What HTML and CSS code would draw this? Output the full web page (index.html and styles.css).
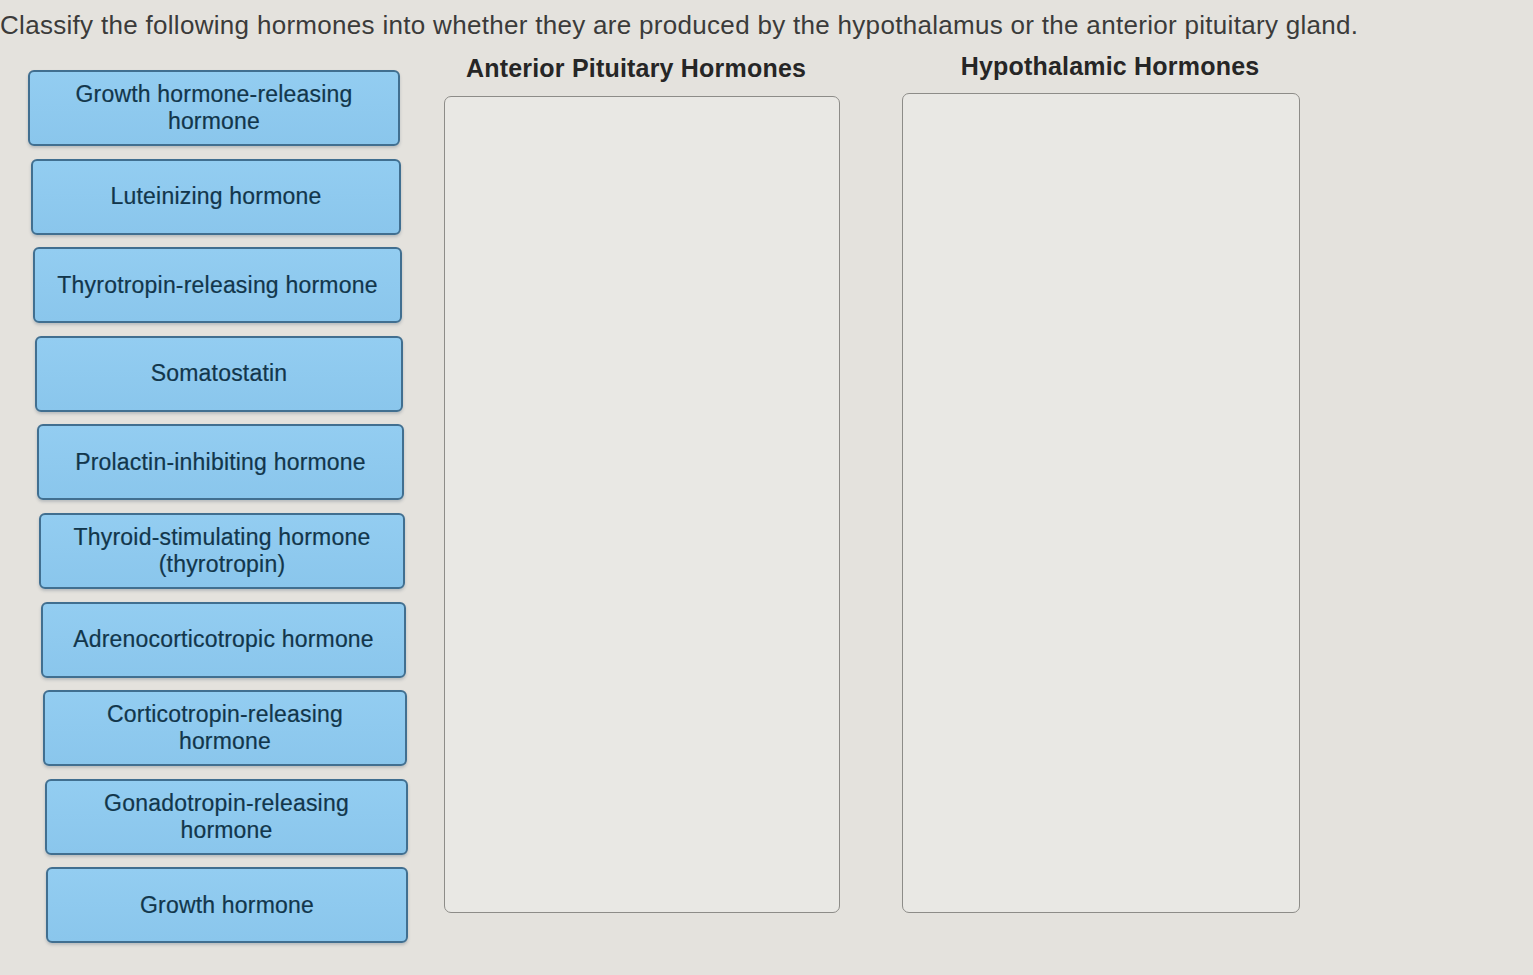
FILE: index.html
```html
<!DOCTYPE html>
<html lang="en">
<head>
<meta charset="utf-8">
<title>Classify hormones</title>
<link rel="stylesheet" href="styles.css">
</head>
<body>
<h1 class="prompt">Classify the following hormones into whether they are produced by the hypothalamus or the anterior pituitary gland.</h1>
<div class="workspace">
  <div class="choices">
    <div class="card">Growth hormone-releasing<br>hormone</div>
    <div class="card">Luteinizing hormone</div>
    <div class="card">Thyrotropin-releasing hormone</div>
    <div class="card">Somatostatin</div>
    <div class="card">Prolactin-inhibiting hormone</div>
    <div class="card">Thyroid-stimulating hormone<br>(thyrotropin)</div>
    <div class="card">Adrenocorticotropic hormone</div>
    <div class="card">Corticotropin-releasing<br>hormone</div>
    <div class="card">Gonadotropin-releasing<br>hormone</div>
    <div class="card">Growth hormone</div>
  </div>
  <div class="bucket bucket-ap">
    <h2 class="bucket-title">Anterior Pituitary Hormones</h2>
    <div class="drop"></div>
  </div>
  <div class="bucket bucket-hy">
    <h2 class="bucket-title">Hypothalamic Hormones</h2>
    <div class="drop"></div>
  </div>
</div>
</body>
</html>
```

FILE: styles.css
```css
html, body {
  margin: 0;
  padding: 0;
}
body {
  background: #e4e2dd;
  font-family: "Liberation Sans", Arial, sans-serif;
  width: 1533px;
  height: 975px;
  overflow: hidden;
}
.prompt {
  margin: 0;
  padding: 11px 0 0 0;
  font-size: 26px;
  line-height: 28px;
  letter-spacing: 0.3px;
  font-weight: normal;
  color: #3b3b3a;
  white-space: nowrap;
}
.workspace {
  display: flex;
  align-items: flex-start;
  padding-top: 15px;
}
.choices {
  width: 420px;
  display: flex;
  flex-direction: column;
  gap: 12.6px;
  padding-top: 16px;
}
.card {
  box-sizing: border-box;
  width: 372px;
  height: 76px;
  display: flex;
  align-items: center;
  justify-content: center;
  text-align: center;
  font-size: 23px;
  line-height: 27px;
  letter-spacing: 0.2px;
  color: #12364b;
  background: linear-gradient(180deg, #93cdf1 0%, #8ac6ec 100%);
  border: 2px solid #416f90;
  border-radius: 6px;
  box-shadow: 0 2px 3px rgba(60, 80, 100, 0.25);
  -webkit-text-stroke: 0.2px #12364b;
}
.card:nth-child(1) { margin-left: 28px; }
.card:nth-child(2) { margin-left: 31px; width: 370px; }
.card:nth-child(3) { margin-left: 33px; width: 369px; }
.card:nth-child(4) { margin-left: 35px; width: 368px; }
.card:nth-child(5) { margin-left: 37px; width: 367px; }
.card:nth-child(6) { margin-left: 39px; width: 366px; }
.card:nth-child(7) { margin-left: 41px; width: 365px; }
.card:nth-child(8) { margin-left: 43px; width: 364px; }
.card:nth-child(9) { margin-left: 45px; width: 363px; }
.card:nth-child(10) { margin-left: 46px; width: 362px; }

.bucket {
  display: flex;
  flex-direction: column;
}
.bucket-ap {
  margin-left: 24px;
  width: 396px;
}
.bucket-hy {
  margin-left: 62px;
  width: 398px;
}
.bucket-title {
  margin: 0 0 14px 0;
  font-size: 25px;
  line-height: 28px;
  letter-spacing: 0.2px;
  font-weight: bold;
  color: #262626;
  text-align: center;
}
.bucket-ap .bucket-title { padding-right: 12px; }
.bucket-hy .bucket-title { padding-left: 18px; margin-bottom: 13px; margin-top: -2px; }
.drop {
  box-sizing: border-box;
  height: 817px;
  background: #e9e8e4;
  border: 1.5px solid #8d8c88;
  border-radius: 7px;
}
.bucket-hy .drop {
  height: 820px;
}
```
